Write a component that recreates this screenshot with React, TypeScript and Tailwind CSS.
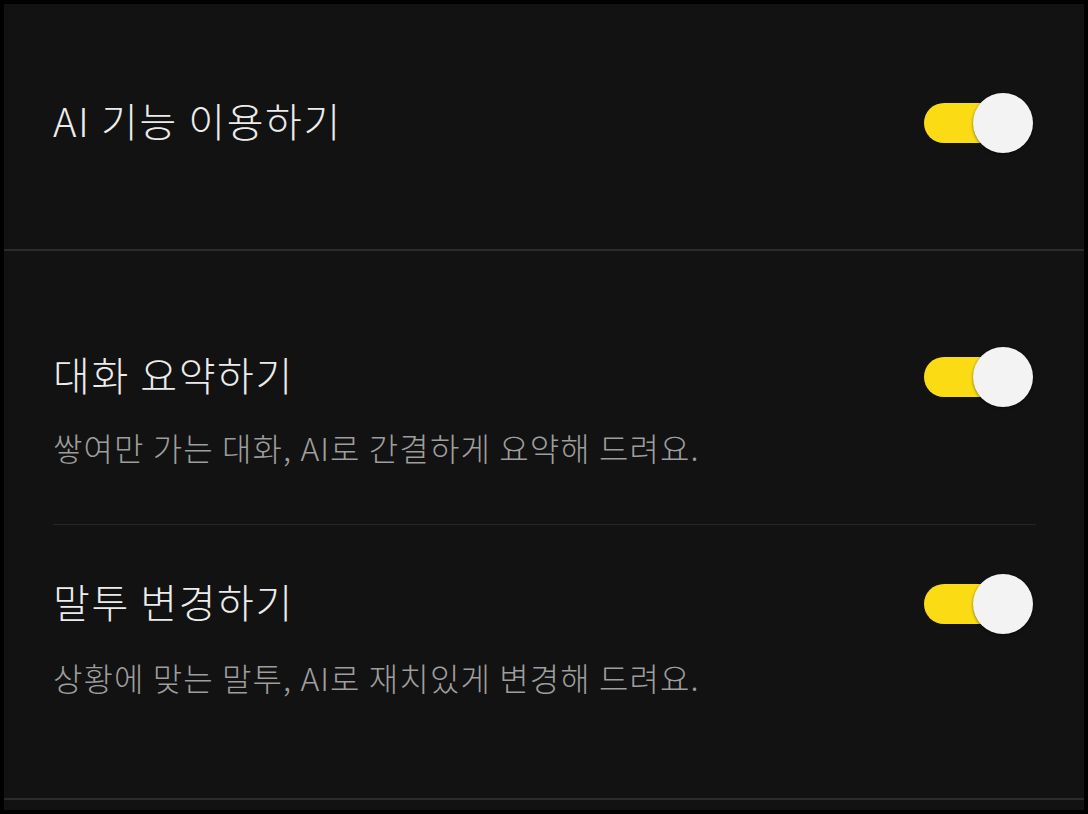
import React, { useState } from 'react';

const FONT = "font-['Noto_Sans_CJK_KR','Noto_Sans',sans-serif]";

interface ToggleProps {
  on: boolean;
  onChange: () => void;
}

const Toggle: React.FC<ToggleProps> = ({ on, onChange }) => (
  <button onClick={onChange} className="relative w-[109px] h-[60px] shrink-0" aria-pressed={on}>
    <span className={`absolute left-0 top-[10px] w-[90px] h-[40px] rounded-full ${on ? 'bg-[#fbdc14]' : 'bg-[#4a4a4a]'}`} />
    <span
      className={`absolute top-0 w-[60px] h-[60px] rounded-full bg-[#f3f3f3] shadow-[0_1px_3px_rgba(0,0,0,0.5)] ${on ? 'left-[49px]' : 'left-0'}`}
    />
  </button>
);

const titleCls = 'text-[40px] leading-[48px] font-light text-[#ececec] tracking-[1.6px] pb-[7px]';
const descCls = 'text-[32px] leading-[40px] font-light text-[#9e9e9e] tracking-[1.1px]';

export default function App() {
  const [aiOn, setAiOn] = useState(true);
  const [summaryOn, setSummaryOn] = useState(true);
  const [toneOn, setToneOn] = useState(true);

  return (
    <div className={`w-[1088px] h-[814px] bg-black p-1 ${FONT}`}>
      <div className="w-full h-full bg-[#121212] flex flex-col">
        {/* Master switch */}
        <div className="h-[247px] pt-[89px] pl-[49px] pr-[51px] border-b-2 border-[#2b2b2b]">
          <div className="flex items-center justify-between h-[60px]">
            <span className={titleCls}>AI 기능 이용하기</span>
            <Toggle on={aiOn} onChange={() => setAiOn(!aiOn)} />
          </div>
        </div>

        {/* Summary */}
        <div className="pt-[96px] pl-[49px] pr-[51px]">
          <div className="flex items-center justify-between h-[60px]">
            <span className={titleCls}>대화 요약하기</span>
            <Toggle on={summaryOn} onChange={() => setSummaryOn(!summaryOn)} />
          </div>
          <p className={`mt-[20px] ${descCls}`}>쌓여만 가는 대화, AI로 간결하게 요약해 드려요.</p>
          <div className="mt-[57px] mr-[-3px] h-px bg-[#262626]" />
        </div>

        {/* Tone */}
        <div className="pt-[49px] pb-[101px] pl-[49px] pr-[51px] border-b-2 border-[#2b2b2b]">
          <div className="flex items-center justify-between h-[60px]">
            <span className={titleCls}>말투 변경하기</span>
            <Toggle on={toneOn} onChange={() => setToneOn(!toneOn)} />
          </div>
          <p className={`mt-[23px] ${descCls}`}>상황에 맞는 말투, AI로 재치있게 변경해 드려요.</p>
        </div>
      </div>
    </div>
  );
}
